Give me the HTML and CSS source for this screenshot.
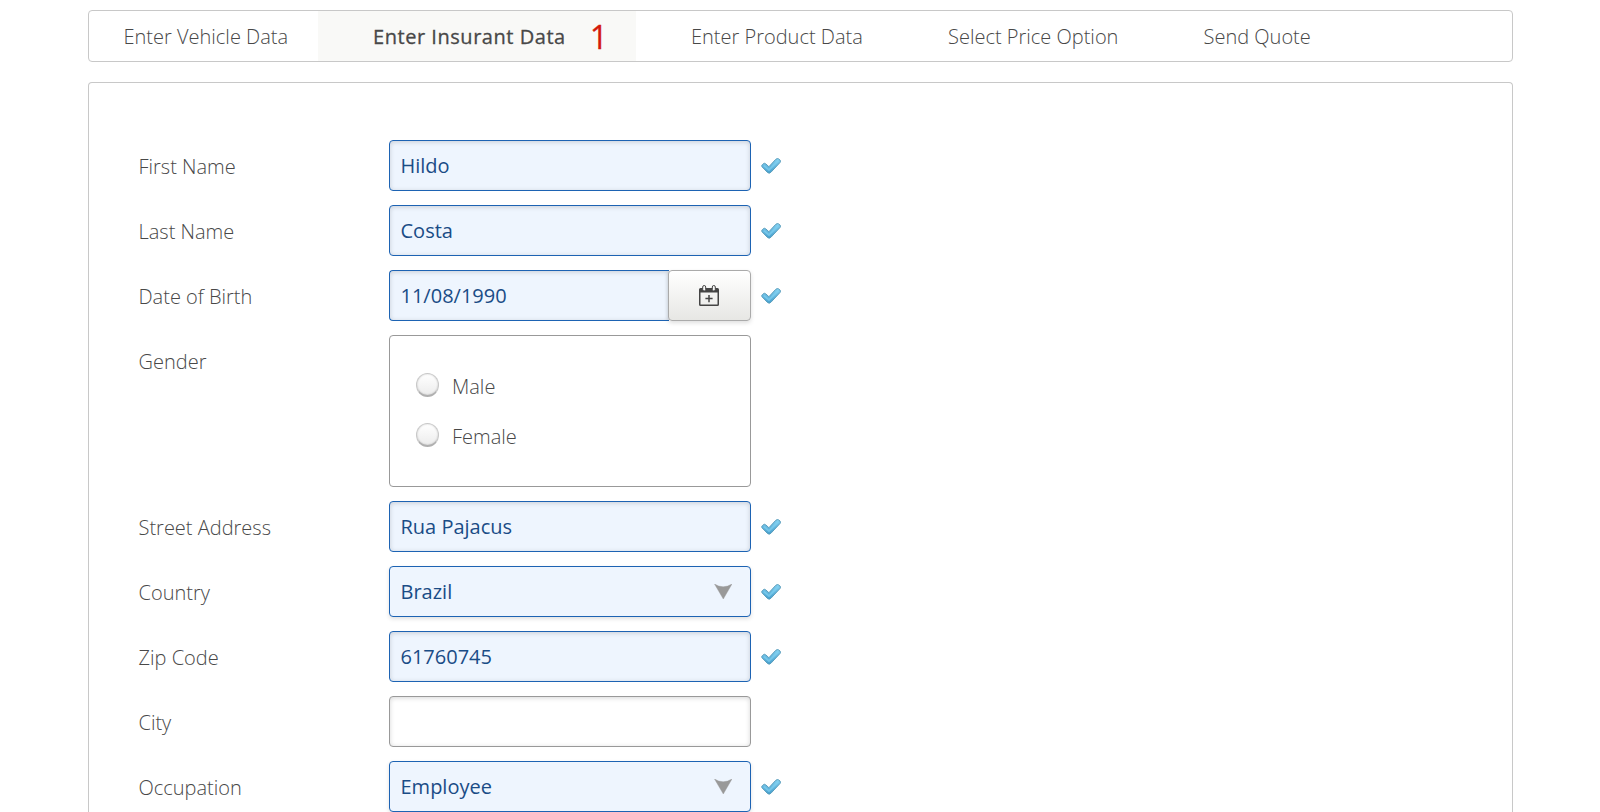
FILE: index.html
```html
<!DOCTYPE html>
<html lang="en">
<head>
<meta charset="utf-8">
<title>Enter Insurant Data</title>
<link rel="stylesheet" href="styles.css">
</head>
<body>
<svg class="defs" aria-hidden="true">
  <defs>
    <linearGradient id="tick-fill" x1="0" y1="0" x2="0" y2="1">
      <stop offset="0" stop-color="#86d2f2"/>
      <stop offset="1" stop-color="#459fce"/>
    </linearGradient>
    <symbol id="tick" viewBox="0 0 20 16">
      <path d="M1 8.800Q.3 7.600 1.300 6.700L2.300 5.700Q3.500 4.700 4.800 5.900L7.900 8.700L14.800 1.300Q16.300 0 17.700.9L18.900 1.900Q20.100 3.100 19 4.500L9.900 14.300Q8.200 16 6.400 14.400Z" fill="url(#tick-fill)" stroke="#5a9dbb" stroke-width="1"/>
      <path d="M3 7.600L8 12L17.200 2.700" fill="none" stroke="#86d4f2" stroke-width="1.800" opacity=".6"/>
    </symbol>
    <symbol id="arrow" viewBox="0 0 18 15">
      <path d="M.5 0Q9 5.600 18 0L9.300 15Z" fill="#999" stroke="#999" stroke-width=".4"/>
    </symbol>
  </defs>
</svg>
<nav class="steps">
  <div class="step step-vehicle">Enter Vehicle Data</div>
  <div class="step step-insurant">Enter Insurant Data<span class="errors">1</span></div>
  <div class="step step-product">Enter Product Data</div>
  <div class="step step-price">Select Price Option</div>
  <div class="step step-send">Send Quote</div>
</nav>
<main class="panel">
  <div class="row"><span class="label">First Name</span><div class="field valid">Hildo</div><svg class="tick"><use href="#tick"/></svg></div>
  <div class="row"><span class="label">Last Name</span><div class="field valid">Costa</div><svg class="tick"><use href="#tick"/></svg></div>
  <div class="row"><span class="label">Date of Birth</span>
    <div class="date">
      <div class="field valid">11/08/1990</div>
      <div class="date-button">
        <svg class="calendar" viewBox="0 0 20 21">
          <path d="M0 4.500Q0 3 1.500 3H18.500Q20 3 20 4.500V19.500Q20 21 18.500 21H1.500Q0 21 0 19.500ZM1.500 7.500V19.500H18.500V7.500Z" fill="#444" fill-rule="evenodd"/>
          <rect x="3.700" y=".5" width="3" height="5.500" rx="1.500" fill="#f8f8f7" stroke="#444"/>
          <rect x="13.300" y=".5" width="3" height="5.500" rx="1.500" fill="#f8f8f7" stroke="#444"/>
          <path d="M10 10V17.200M6.400 13.600H13.600" stroke="#444" stroke-width="1.500"/>
        </svg>
      </div>
    </div>
    <svg class="tick"><use href="#tick"/></svg></div>
  <div class="row"><span class="label">Gender</span>
    <div class="choices">
      <div class="choice"><span class="radio"></span><span>Male</span></div>
      <div class="choice"><span class="radio"></span><span>Female</span></div>
    </div></div>
  <div class="row"><span class="label">Street Address</span><div class="field valid">Rua Pajacus</div><svg class="tick"><use href="#tick"/></svg></div>
  <div class="row"><span class="label">Country</span><div class="field valid select">Brazil<svg class="arrow"><use href="#arrow"/></svg></div><svg class="tick"><use href="#tick"/></svg></div>
  <div class="row"><span class="label">Zip Code</span><div class="field valid">61760745</div><svg class="tick"><use href="#tick"/></svg></div>
  <div class="row"><span class="label">City</span><div class="field"></div></div>
  <div class="row"><span class="label">Occupation</span><div class="field valid select">Employee<svg class="arrow"><use href="#arrow"/></svg></div><svg class="tick"><use href="#tick"/></svg></div>
</main>
</body>
</html>
```
FILE: styles.css
```css
* { box-sizing: border-box; }
body {
  height: 812px;
  margin: 0;
  padding: 10px 87px 0 88px;
  display: flex;
  flex-direction: column;
  gap: 20px;
  overflow: hidden;
  background: #fff;
  color: #484848;
  font: 300 20px/28px "Open Sans", sans-serif;
}
.defs { position: absolute; width: 0; height: 0; }
.steps {
  display: flex;
  flex: none;
  height: 52px;
  border: 1px solid #c8c8c8;
  border-radius: 4px;
}
.step { height: 50px; line-height: 52px; white-space: nowrap; }
.step-vehicle { width: 229px; padding-left: 34.5px; }
.step-insurant {
  display: flex;
  width: 318px;
  padding-left: 55px;
  background: #f9f9f7;
  font-weight: 500;
  letter-spacing: .54px;
  -webkit-text-stroke: .3px;
}
.errors {
  margin-left: 24px;
  color: #d41a0c;
  font-size: 32px;
  font-weight: 400;
  letter-spacing: 0;
}
.step-product { width: 257px; padding-left: 55px; }
.step-price { width: 255px; padding-left: 55px; }
.step-send { padding-left: 55.5px; }
.panel {
  flex: 1;
  display: flex;
  flex-direction: column;
  gap: 14px;
  padding: 57px 0 0 49px;
  border: 1px solid #c8c8c8;
  border-bottom: 0;
  border-radius: 4px 4px 0 0;
}
.row { display: flex; flex: none; }
.label { width: 251px; padding: 13px 0 0 .5px; }
.field {
  display: flex;
  width: 362px;
  height: 51px;
  padding: 0 18px 0 10.5px;
  align-items: center;
  border: 1px solid #999;
  border-radius: 4px;
  box-shadow: inset 0 1px 5px rgba(0, 0, 0, .16);
  font-weight: 400;
}
.valid {
  border-color: #1d63b3;
  background: #eef5fe;
  color: #1a4c86;
}
.select {
  justify-content: space-between;
  box-shadow: 0 2px 4px rgba(0, 0, 0, .12);
}
.arrow { width: 18px; height: 15px; margin-top: 0; }
.tick { width: 20px; height: 16px; margin: 18px 0 0 10px; }
.date { display: flex; width: 362px; }
.date .field { width: 280px; border-right: 0; border-radius: 4px 0 0 4px; }
.date-button {
  display: flex;
  width: 83px;
  height: 51px;
  margin-left: -1px;
  align-items: center;
  justify-content: center;
  border: 1px solid #aaa;
  border-radius: 4px;
  background: linear-gradient(#fff, #e7e7e4);
  box-shadow: 0 2px 4px rgba(0, 0, 0, .13);
}
.calendar { width: 20px; height: 21px; margin-right: 1px; }
.choices {
  display: flex;
  flex-direction: column;
  gap: 22px;
  width: 362px;
  height: 152px;
  padding: 37px 0 0 26px;
  border: 1px solid #999;
  border-radius: 4px;
}
.choice { display: flex; height: 28px; gap: 13px; }
.radio {
  width: 23px;
  height: 24px;
  border: 1px solid #c8c8c8;
  border-bottom: 2px solid #b0b0b0;
  border-radius: 50%;
  background: linear-gradient(#fff, #ececec);
  box-shadow: inset 0 0 2px rgba(0, 0, 0, .2);
}
```
